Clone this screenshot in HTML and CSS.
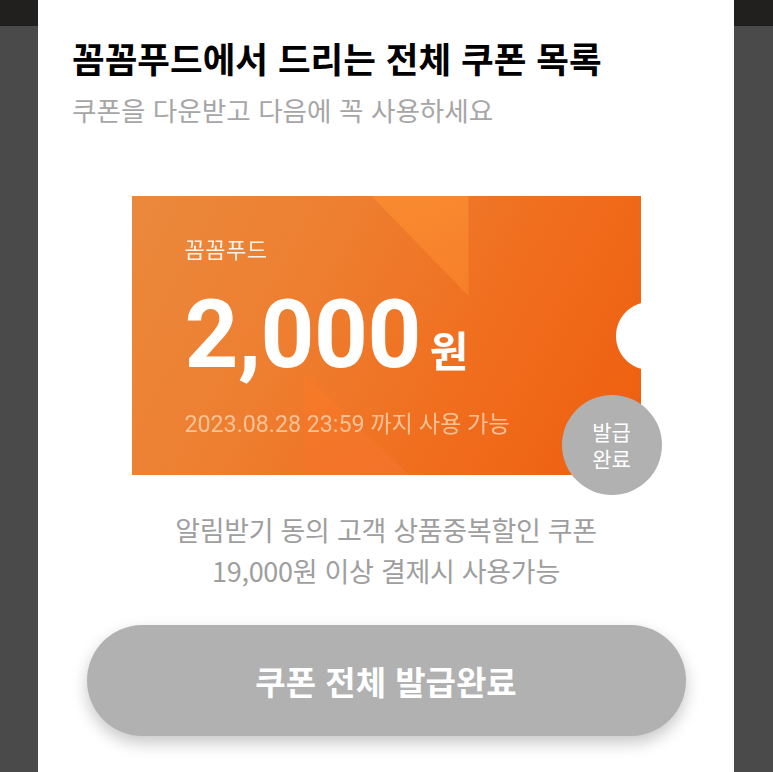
FILE: index.html
```html
<!DOCTYPE html>
<html lang="ko">
<head>
<meta charset="utf-8">
<link rel="stylesheet" href="styles.css">
</head>
<body>
<div class="panel">
  <h1 class="title">꼼꼼푸드에서 드리는 전체 쿠폰 목록</h1>
  <p class="subtitle">쿠폰을 다운받고 다음에 꼭 사용하세요</p>

  <div class="coupon">
    <div class="coupon-bg">
      <div class="shape shape-top"></div>
      <div class="shape shape-bottom"></div>
      <div class="coupon-body">
        <div class="brand">꼼꼼푸드</div>
        <div class="amount"><span class="num">2,000</span><span class="won">원</span></div>
        <div class="expire">2023.08.28 23:59 까지 사용 가능</div>
      </div>
    </div>
    <div class="badge"><p class="badge-text">발급<br>완료</p></div>
  </div>

  <p class="desc">알림받기 동의 고객 상품중복할인 쿠폰<br>19,000원 이상 결제시 사용가능</p>

  <div class="btn-wrap">
    <button class="btn" type="button">쿠폰 전체 발급완료</button>
  </div>
</div>
</body>
</html>
```

FILE: styles.css
```css
html, body {
  margin: 0;
  padding: 0;
}
body {
  width: 773px;
  height: 772px;
  overflow: hidden;
  background: linear-gradient(to bottom, #221f1f 0, #221f1f 26px, #4a4a4a 26px, #4a4a4a 100%);
  font-family: "Noto Sans CJK KR", "Noto Sans", sans-serif;
}
.panel {
  margin-left: 38px;
  width: 696px;
  height: 772px;
  background: #ffffff;
  box-sizing: border-box;
  padding-top: 38px;
  display: flex;
  flex-direction: column;
}
.title {
  margin: 0 0 0 34px;
  font-size: 35.5px;
  line-height: 40px;
  font-weight: 700;
  color: #000;
  letter-spacing: 0;
  white-space: nowrap;
}
.subtitle {
  margin: 16px 0 0 34px;
  font-size: 26.6px;
  line-height: 32px;
  font-weight: 400;
  color: #a6a6a6;
  white-space: nowrap;
}
.coupon {
  position: relative;
  margin: 70px auto 0;
  width: 509px;
  height: 279px;
}
.coupon-bg {
  position: relative;
  width: 100%;
  height: 100%;
  overflow: hidden;
  background: linear-gradient(118deg, #ea893c 0%, #ee7e30 35%, #f06e1e 65%, #ee5e0e 100%);
  -webkit-mask: radial-gradient(circle 34px at 518px 140px, transparent 33.5px, #000 34.5px);
  mask: radial-gradient(circle 34px at 518px 140px, transparent 33.5px, #000 34.5px);
}
.shape {
  position: absolute;
}
.shape-top {
  left: 240px;
  top: 0;
  width: 97px;
  height: 100px;
  background: linear-gradient(160deg, #f98a30, #f6802a);
  clip-path: polygon(0 0, 100% 0, 100% 100%);
}
.shape-bottom {
  left: 172px;
  top: 177px;
  width: 105px;
  height: 102px;
  background: linear-gradient(160deg, #f67b27, #f2722a);
  clip-path: polygon(0 0, 0 100%, 100% 100%);
}
.coupon-body {
  position: relative;
  padding: 39px 0 0 53px;
  display: flex;
  flex-direction: column;
  align-items: flex-start;
}
.brand {
  font-size: 22px;
  line-height: 26px;
  color: rgba(255, 255, 255, 0.9);
  letter-spacing: 0.5px;
}
.amount {
  margin-top: 27px;
  height: 94px;
  line-height: 94px;
  color: #fff;
  white-space: nowrap;
}
.num {
  font-family: Roboto, "Noto Sans", sans-serif;
  font-weight: 700;
  font-size: 94px;
  line-height: 94px;
  letter-spacing: -0.5px;
}
.won {
  font-family: "Noto Sans CJK KR", sans-serif;
  font-weight: 700;
  font-size: 42px;
  line-height: 1;
  margin-left: 9px;
}
.expire {
  margin-top: 29px;
  font-family: Roboto, "Noto Sans CJK KR", sans-serif;
  font-size: 23.2px;
  line-height: 26px;
  color: #f9c296;
  white-space: nowrap;
}
.badge {
  position: absolute;
  left: 430px;
  top: 199px;
  width: 100px;
  height: 100px;
  border-radius: 50%;
  background: #b1b1b1;
  display: flex;
  align-items: center;
  justify-content: center;
}
.badge-text {
  margin: 0;
  color: #fff;
  font-size: 21px;
  line-height: 27px;
  text-align: center;
}
.desc {
  margin: 34px 0 0;
  text-align: center;
  font-size: 27px;
  line-height: 41px;
  color: #9e9e9e;
  letter-spacing: -0.3px;
}
.btn-wrap {
  margin-top: 34px;
  display: flex;
  justify-content: center;
}
.btn {
  width: 599px;
  height: 111px;
  border: none;
  border-radius: 56px;
  background: #b1b1b1;
  color: #fff;
  font-family: "Noto Sans CJK KR", sans-serif;
  font-weight: 700;
  font-size: 33px;
  box-shadow: 0 7px 16px rgba(0, 0, 0, 0.22);
  padding: 0;
}
```
